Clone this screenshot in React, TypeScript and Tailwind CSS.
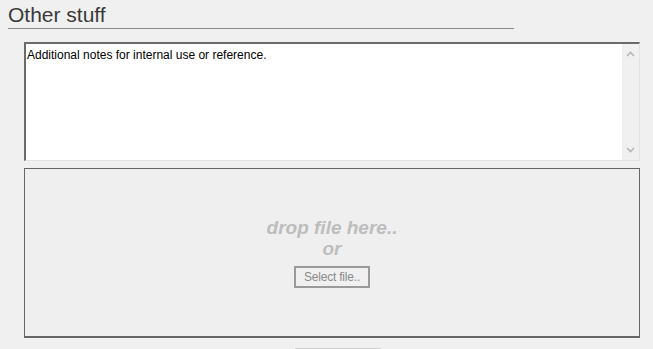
import { useState } from "react";

function Chevron({ up }: { up?: boolean }) {
  return (
    <svg width="9" height="6" viewBox="0 0 9 6" className="text-[#b5b5b5]">
      <path
        d={up ? "M1 5 L4.5 1.5 L8 5" : "M1 1 L4.5 4.5 L8 1"}
        fill="none"
        stroke="currentColor"
        strokeWidth="1.6"
      />
    </svg>
  );
}

export default function App() {
  const [notes, setNotes] = useState("Additional notes for internal use or reference.");

  return (
    <div className="min-h-[349px] bg-[#f0f0f0] pt-[3px] font-['Liberation_Sans',Arial,sans-serif]">
      {/* Section heading */}
      <div className="ml-[8px] w-[506px] border-b border-[#8a8a8a] pb-[2px]">
        <h2 className="text-[21px] leading-[23px] text-[#3a3a3a]">Other stuff</h2>
      </div>

      <div className="pl-[24px] pr-[13px] pt-[13px]">
        {/* Notes */}
        <div className="flex h-[119px] border-l-2 border-t-2 border-[#6a6a6a] border-r border-b border-r-[#e3e3e3] border-b-[#e3e3e3] bg-white">
          <textarea
            value={notes}
            onChange={(e) => setNotes(e.target.value)}
            className="flex-1 resize-none overflow-hidden bg-white px-[1px] pt-[4px] text-[12px] leading-[14px] text-black outline-none"
          />
          <div className="flex w-[17px] flex-col items-center justify-between bg-[#f0f0f0] py-[7px]">
            <Chevron up />
            <Chevron />
          </div>
        </div>

        {/* Drop zone */}
        <div className="mt-[7px] flex h-[170px] flex-col items-center justify-center border border-b-2 border-[#666] bg-[#efefef]">
          <div className="text-[19px] font-bold italic leading-[22px] text-[#bdbdbd]">
            drop file here..
          </div>
          <div className="text-[19px] font-bold italic leading-[20px] text-[#bdbdbd]">or</div>
          <button className="mt-[7px] h-[22px] w-[76px] border-2 border-[#9a9a9a] bg-[#f0f0f0] text-[12px] leading-[16px] tracking-[-0.2px] text-[#8a8a8a]">
            Select file..
          </button>
        </div>

        <div className="ml-[271px] mt-[10px] h-[10px] w-[86px] bg-[#d0d0d0]" />
      </div>
    </div>
  );
}
